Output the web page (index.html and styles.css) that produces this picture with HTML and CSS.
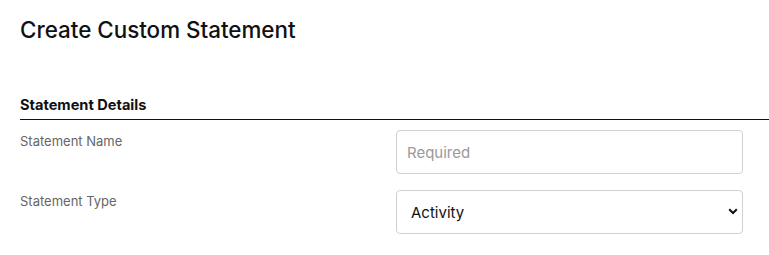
FILE: index.html
```html
<!DOCTYPE html>
<html lang="en">
<head>
<meta charset="utf-8">
<link rel="stylesheet" href="styles.css">
</head>
<body>
<div class="page">
  <h1 class="title">Create Custom Statement</h1>
  <section class="section">
    <h2 class="section-title">Statement Details</h2>
    <div class="form">
      <div class="row">
        <label class="label" for="name">Statement Name</label>
        <input class="control" id="name" type="text" placeholder="Required">
      </div>
      <div class="row">
        <label class="label" for="type">Statement Type</label>
        <div class="select-wrap">
          <select class="control select" id="type">
            <option>Activity</option>
          </select>
          <svg class="chev" width="10" height="7" viewBox="0 0 10 7"><path d="M1.2 1.3 L5 5 L8.8 1.3" fill="none" stroke="#111" stroke-width="2"/></svg>
        </div>
      </div>
    </div>
  </section>
</div>
</body>
</html>
```
FILE: styles.css
```css
* { box-sizing: border-box; }
html, body { margin: 0; padding: 0; background: #fff; }
body { font-family: Inter, "Liberation Sans", sans-serif; color: #111; overflow: hidden; }
.page { padding: 16px 0 0 20px; }
.title { margin: 0; font-size: 22.4px; font-weight: 500; line-height: 28px; color: #111; }
.section { margin-top: 51px; }
.section-title { margin: 0; font-size: 14.6px; font-weight: 700; line-height: 20px; padding-bottom: 4px; border-bottom: 1px solid #111; color: #111; }
.form { display: flex; flex-direction: column; gap: 16px; padding-top: 10px; }
.row { display: grid; grid-template-columns: 376px 347px; align-items: start; }
.label { font-size: 13px; color: #666; line-height: 18px; padding-top: 2px; }
.control { width: 100%; height: 44px; border: 1px solid #d0d0d0; border-radius: 4px; font-family: inherit; font-size: 15px; padding: 0 10px; background: #fff; color: #111; outline: none; }
.control::placeholder { color: #9a9a9a; }
.select-wrap { position: relative; }
.select { appearance: none; -webkit-appearance: none; padding-left: 14px; }
.chev { position: absolute; right: 5px; top: 18px; pointer-events: none; }
```
